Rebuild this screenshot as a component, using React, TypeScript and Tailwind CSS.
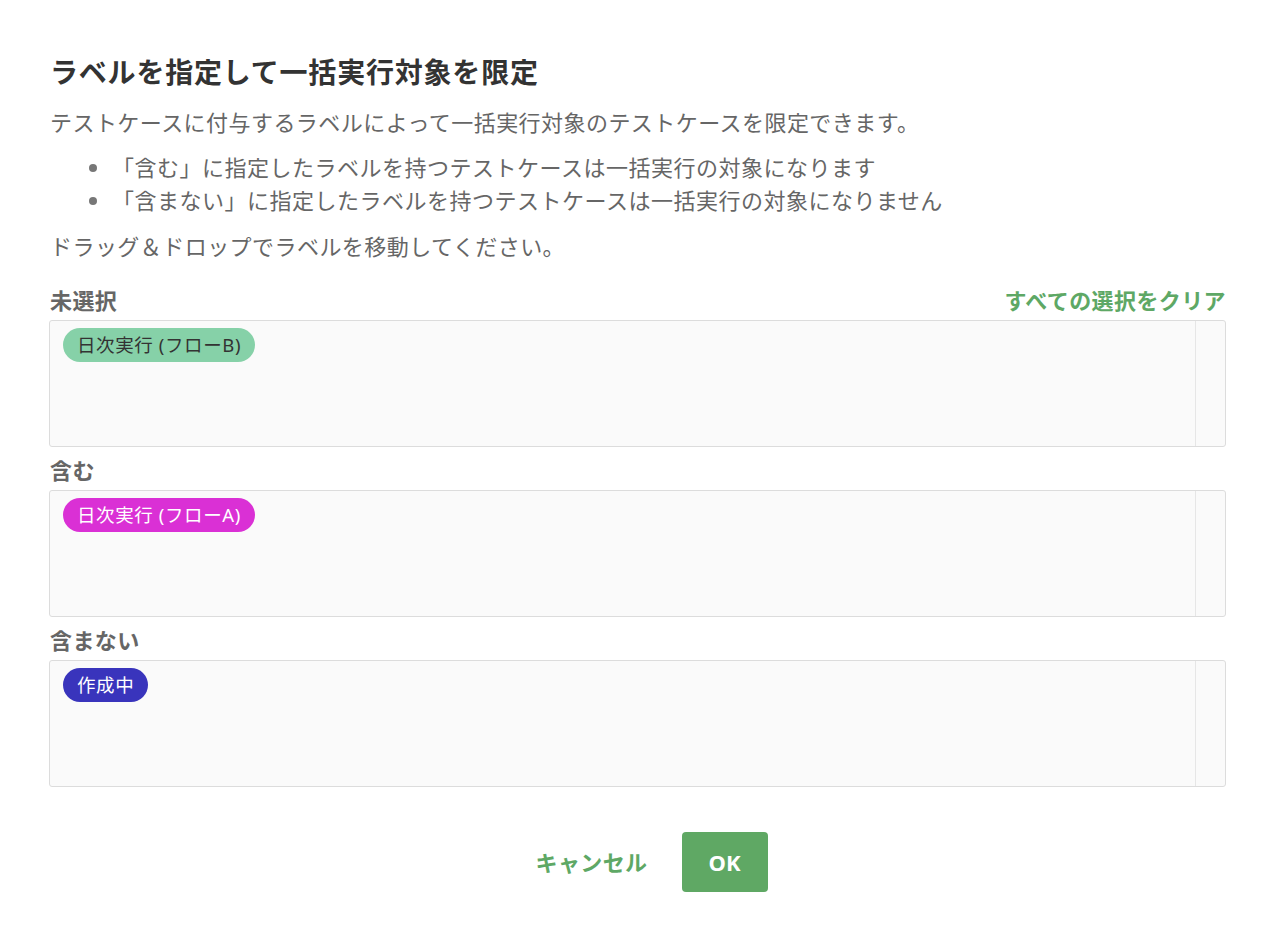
import type { ReactNode } from 'react'

const font = { fontFamily: '"Noto Sans", "Noto Sans CJK JP", sans-serif' }

function Chip({ label, className }: { label: string; className: string }) {
  return (
    <span
      className={`inline-flex h-[34px] items-center rounded-full px-[14px] text-[18.5px] leading-none tracking-[0.6px] ${className}`}
    >
      {label}
    </span>
  )
}

function DropZone({ children }: { children?: ReactNode }) {
  return (
    <div className="flex h-[127px] rounded-[3px] border border-[#dcdcdc] bg-[#fafafa]">
      <div className="flex flex-1 flex-wrap content-start gap-2 px-[13px] py-[7px]">{children}</div>
      <div className="w-[30px] border-l border-[#e6e6e6]" />
    </div>
  )
}

function SectionLabel({ children }: { children: ReactNode }) {
  return (
    <div className="h-[30px] text-[22px] font-bold leading-[30px] tracking-[0.4px] text-[#666]">{children}</div>
  )
}

export default function App() {
  return (
    <div className="min-h-[930px] bg-white" style={font}>
      <div className="ml-[49px] mr-[50px] pt-[52px]">
        <div className="pl-px">
          <h1 className="text-[28px] font-bold leading-[40px] tracking-[0.8px] text-[#333]">
            ラベルを指定して一括実行対象を限定
          </h1>
          <p className="mt-[14px] text-[22px] leading-[33px] tracking-[0.45px] text-[#666]">
            テストケースに付与するラベルによって一括実行対象のテストケースを限定できます。
          </p>
          <ul className="mt-[12px] list-disc pl-[62px] text-[22px] leading-[33px] tracking-[0.5px] text-[#666] marker:text-[#777]">
            <li>「含む」に指定したラベルを持つテストケースは一括実行の対象になります</li>
            <li>「含まない」に指定したラベルを持つテストケースは一括実行の対象になりません</li>
          </ul>
          <p className="mt-[13px] text-[22px] leading-[33px] tracking-[0.45px] text-[#666]">
            ドラッグ＆ドロップでラベルを移動してください。
          </p>
        </div>

        <div className="mt-[22px]">
          <div className="flex items-center justify-between pl-px">
            <SectionLabel>未選択</SectionLabel>
            <button className="text-[22px] font-bold leading-[30px] tracking-[0.4px] text-[#5ea865]">
              すべての選択をクリア
            </button>
          </div>
          <div className="mt-[5px]">
            <DropZone>
              <Chip label="日次実行 (フローB)" className="bg-[#86d1a8] text-[#333]" />
            </DropZone>
          </div>
        </div>

        <div className="mt-[8px] pl-px">
          <SectionLabel>含む</SectionLabel>
        </div>
        <div className="mt-[5px]">
          <DropZone>
            <Chip label="日次実行 (フローA)" className="bg-[#da30d5] text-white" />
          </DropZone>
        </div>

        <div className="mt-[8px] pl-px">
          <SectionLabel>含まない</SectionLabel>
        </div>
        <div className="mt-[5px]">
          <DropZone>
            <Chip label="作成中" className="bg-[#3934bc] text-white" />
          </DropZone>
        </div>

        <div className="mt-[45px] flex items-center justify-center gap-[10px] pl-[4px]">
          <button className="h-[60px] px-[24px] text-[22px] font-bold tracking-[0.4px] text-[#5ea865]">
            キャンセル
          </button>
          <button className="h-[60px] w-[86px] rounded-[4px] bg-[#5fa864] text-[22px] font-bold text-white">
            OK
          </button>
        </div>
      </div>
    </div>
  )
}
